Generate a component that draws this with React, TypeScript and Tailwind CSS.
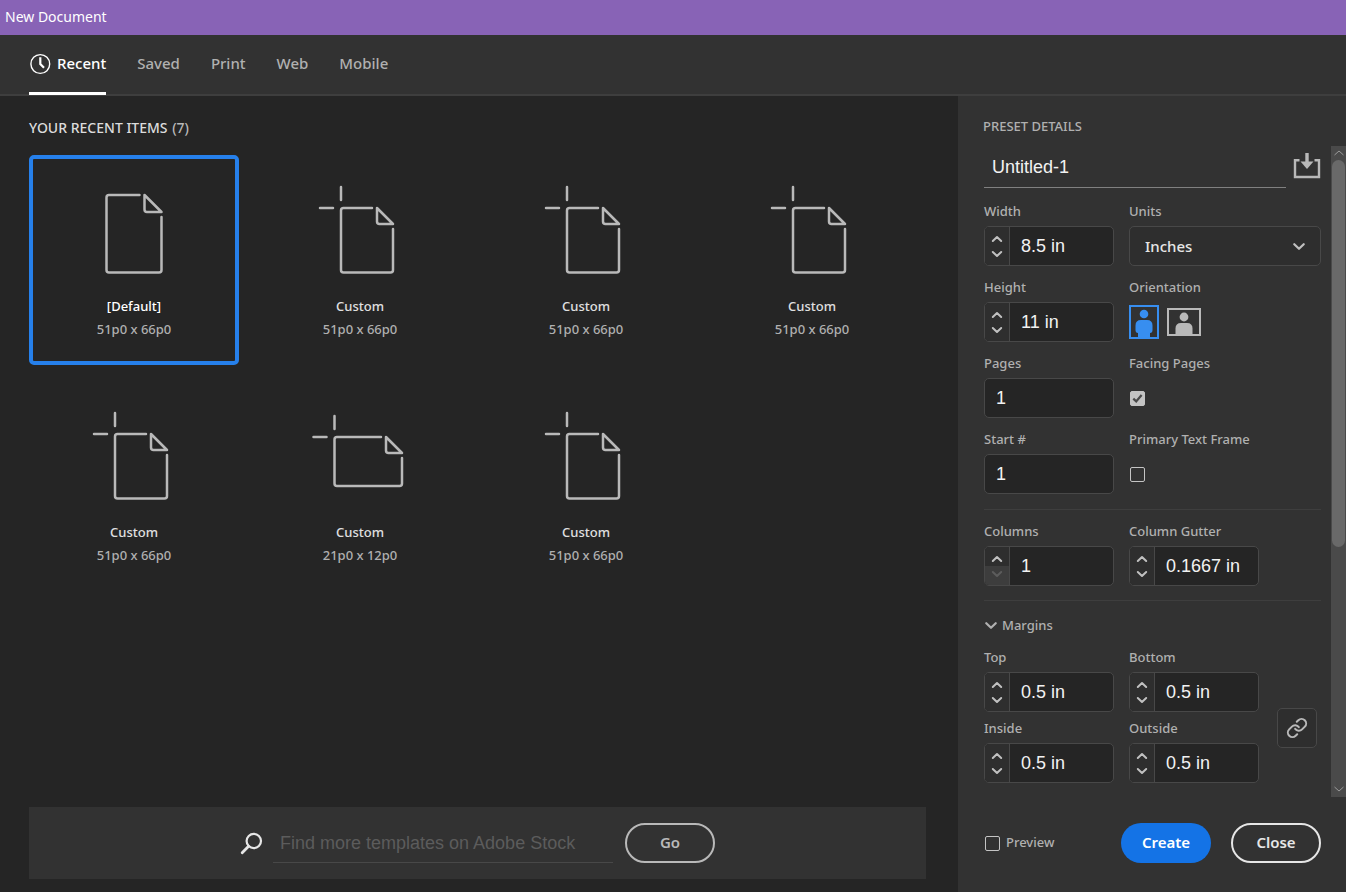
import { useId, type ReactNode } from "react";

type DocShape = { left: number; top: number; right: number; bottom: number; fold: number; marks: boolean };

const defaultDoc: DocShape = { left: 32.5, top: 15, right: 87.5, bottom: 92.5, fold: 17, marks: false };
const portraitDoc: DocShape = { left: 41, top: 28, right: 93, bottom: 92.5, fold: 16, marks: true };
const landscapeDoc: DocShape = { left: 34.5, top: 31, right: 102, bottom: 80, fold: 16, marks: true };

const presets = [
  { name: "[Default]", size: "51p0 x 66p0", doc: defaultDoc },
  { name: "Custom", size: "51p0 x 66p0", doc: portraitDoc },
  { name: "Custom", size: "51p0 x 66p0", doc: portraitDoc },
  { name: "Custom", size: "51p0 x 66p0", doc: portraitDoc },
  { name: "Custom", size: "51p0 x 66p0", doc: portraitDoc },
  { name: "Custom", size: "21p0 x 12p0", doc: landscapeDoc },
  { name: "Custom", size: "51p0 x 66p0", doc: portraitDoc },
];

function DocIcon({ left: l, top: t, right: r, bottom: b, fold: f, marks }: DocShape) {
  return (
    <svg width="120" height="100" viewBox="0 0 120 100" fill="none" stroke="#b9b9b9" strokeWidth="2.5" strokeLinecap="round" strokeLinejoin="round" aria-hidden="true">
      <path d={`M${r - f - 5} ${t}H${l + 2.5}Q${l} ${t} ${l} ${t + 2.5}V${b - 2.5}Q${l} ${b} ${l + 2.5} ${b}H${r - 2.5}Q${r} ${b} ${r} ${b - 2.5}V${t + f + 5}`} />
      <path d={`M${r - f} ${t}V${t + f - 2.5}Q${r - f} ${t + f} ${r - f + 2.5} ${t + f}H${r}Z`} />
      {marks && <path d={`M${l} ${t - 21}V${t - 8}M${l - 21} ${t}H${l - 8}`} />}
    </svg>
  );
}

function Chevron({ up = false, className }: { up?: boolean; className: string }) {
  return (
    <svg viewBox="0 0 12 8" className={className} fill="none" stroke="currentColor" strokeWidth="2" strokeLinecap="round" strokeLinejoin="round" aria-hidden="true">
      <path d={up ? "M1.8 6 6 2 10.2 6" : "M1.8 2 6 6 10.2 2"} />
    </svg>
  );
}

const inputText = "font-['Liberation_Sans',sans-serif] text-[18px] text-[#f2f2f2] outline-none";

function Field({ label, value, stepper = true, minReached = false }: { label: string; value: string; stepper?: boolean; minReached?: boolean }) {
  const id = useId();
  return (
    <div className="flex w-[130px] flex-col gap-[7px]">
      <label htmlFor={id} className="leading-4">{label}</label>
      <div className="flex h-10 overflow-hidden rounded-[5px] border border-[#484848] bg-[#252525]">
        {stepper && (
          <div className="flex w-[25px] shrink-0 flex-col border-r border-[#484848] bg-[#2e2e2e] text-[#c0c0c0]">
            <button type="button" aria-label={`Increase ${label}`} className="flex flex-1 items-end justify-center pb-[3px]">
              <Chevron up className="h-2 w-3" />
            </button>
            <button
              type="button"
              aria-label={`Decrease ${label}`}
              disabled={minReached}
              className="flex flex-1 items-start justify-center pt-1 disabled:bg-[#3d3d3d] disabled:text-[#5c5c5c]"
            >
              <Chevron className="h-2 w-3" />
            </button>
          </div>
        )}
        <input id={id} defaultValue={value} className={`w-full min-w-0 bg-transparent px-[11px] ${inputText}`} />
      </div>
    </div>
  );
}

function CheckBox({ id, checked = false }: { id: string; checked?: boolean }) {
  return (
    <span className="relative flex size-[15px] shrink-0">
      <input
        id={id}
        type="checkbox"
        defaultChecked={checked}
        className="peer size-[15px] appearance-none rounded-[2px] border border-[#c4c4c4] checked:bg-[#c4c4c4]"
      />
      <svg viewBox="0 0 15 15" className="pointer-events-none absolute inset-0 hidden size-[15px] peer-checked:block" fill="none" stroke="#4a4a4a" strokeWidth="2.2" aria-hidden="true">
        <path d="M3.3 7.6 6.2 10.4 11.6 4" />
      </svg>
    </span>
  );
}

function CheckField({ label, checked }: { label: string; checked?: boolean }) {
  const id = useId();
  return (
    <div className="flex flex-col gap-[7px]">
      <label htmlFor={id} className="leading-4">{label}</label>
      <div className="flex h-10 items-center pl-px">
        <CheckBox id={id} checked={checked} />
      </div>
    </div>
  );
}

function Row({ children }: { children: ReactNode }) {
  return <div className="grid grid-cols-[130px_1fr] gap-[15px]">{children}</div>;
}

function Header() {
  return (
    <header>
      <h1 className="flex h-[35px] items-center bg-[#8863b6] px-[5px] pb-[2px] text-[14px] text-white">New Document</h1>
      <nav className="flex h-[61px] gap-[31px] border-b-2 border-[#3e3e3e] bg-[#323232] px-[29px] text-[15px] font-medium text-[#b0b0b0]">
        <a href="#recent" aria-current="page" className="-mb-px flex items-center gap-[6px] border-b-[3px] border-white text-white">
          <svg viewBox="0 0 22 22" className="size-[22px]" fill="none" stroke="currentColor" aria-hidden="true">
            <circle cx="11.3" cy="11" r="9.4" strokeWidth="1.4" />
            <path d="M11.3 4.3V11L15 14.8" strokeWidth="2.2" />
          </svg>
          Recent
        </a>
        <a href="#saved" className="-mb-px flex items-center border-b-[3px] border-transparent">Saved</a>
        <a href="#print" className="-mb-px flex items-center border-b-[3px] border-transparent">Print</a>
        <a href="#web" className="-mb-px flex items-center border-b-[3px] border-transparent">Web</a>
        <a href="#mobile" className="-mb-px flex items-center border-b-[3px] border-transparent">Mobile</a>
      </nav>
    </header>
  );
}

function RecentItems() {
  return (
    <main className="flex min-w-0 flex-1 flex-col bg-[#252525] pt-[22px] pr-8 pb-[13px] pl-[29px]">
      <h2 className="text-[14px] leading-5 font-medium text-[#dcdcdc]">
        YOUR RECENT ITEMS <span className="pl-px text-[#b9b9b9]">(7)</span>
      </h2>
      <div className="mt-[17px] grid grid-cols-[repeat(auto-fill,210px)] gap-4">
        {presets.map((p, i) => (
          <button
            key={i}
            type="button"
            aria-pressed={i === 0}
            className="flex h-[210px] flex-col items-center rounded-[5px] border-4 border-transparent pt-[21px] text-[13px] leading-[23px] font-medium text-[#b0b0b0] aria-pressed:border-[#2680eb]"
          >
            <DocIcon {...p.doc} />
            <span className={i === 0 ? "mt-[15px] text-white" : "mt-[15px] text-[#e0e0e0]"}>{p.name}</span>
            <span>{p.size}</span>
          </button>
        ))}
      </div>
      <form className="mt-auto flex items-center justify-center bg-[#323232] py-4" onSubmit={(e) => e.preventDefault()}>
        <svg viewBox="0 0 24 24" className="size-6" fill="none" stroke="#e6e6e6" strokeLinecap="round" aria-hidden="true">
          <circle cx="13.8" cy="10" r="7.2" strokeWidth="2.2" />
          <path d="M8.600 15.200 2.200 21.800" strokeWidth="2.800" />
        </svg>
        <input
          aria-label="Find more templates on Adobe Stock"
          placeholder="Find more templates on Adobe Stock"
          className={`ml-[9px] h-10 w-[340px] min-w-0 border-b border-[#484848] px-[7px] pt-px placeholder:text-[#5c5c5c] ${inputText}`}
        />
        <button type="submit" className="ml-3 h-10 w-[90px] rounded-full border-2 border-[#b9b9b9] pb-[2px] text-[15px] font-semibold text-[#b9b9b9]">
          Go
        </button>
      </form>
    </main>
  );
}

function Scrollbar() {
  return (
    <div className="flex w-[15px] shrink-0 flex-col items-center bg-[#4a4a4a] text-[#9a9a9a]" aria-hidden="true">
      <svg viewBox="0 0 12 8" className="my-[3px] h-2 w-3" fill="none" stroke="currentColor"><path d="M1.5 6 6 2 10.5 6" /></svg>
      <div className="h-[387px] w-[13px] rounded-full bg-[#696969]" />
      <svg viewBox="0 0 12 8" className="mt-auto mb-1 h-2 w-3" fill="none" stroke="currentColor"><path d="M1.5 2 6 6 10.5 2" /></svg>
    </div>
  );
}

function PresetDetails() {
  return (
    <aside className="flex w-[388px] shrink-0 flex-col bg-[#323232] text-[13px] font-medium text-[#b0b0b0]">
      <h2 className="pt-5 pb-[10px] pl-[25px] leading-5">PRESET DETAILS</h2>
      <div className="flex flex-1 gap-[10px] pl-[26px]">
        <form className="flex min-w-0 flex-1 flex-col pb-3">
          <div className="flex h-[42px] justify-between">
            <input aria-label="Document name" defaultValue="Untitled-1" className={`w-[302px] border-b border-[#808080] px-2 pt-px ${inputText}`} />
            <button type="button" aria-label="Save preset">
              <svg viewBox="0 0 28 28" className="mb-1 size-7" fill="none" stroke="#b9b9b9" strokeWidth="2.4" aria-hidden="true">
                <path d="M6.500 9.200H2V26H26V9.200H21.500" />
                <path d="M14 2V12" strokeWidth="3.400" />
                <path d="M7.500 10.500H20.500L14 18Z" fill="#b9b9b9" stroke="none" />
              </svg>
            </button>
          </div>
          <div className="mt-[15px] flex flex-col gap-[13px]">
            <Row>
              <Field label="Width" value="8.5 in" />
              <div className="flex flex-col gap-[7px]">
                <label htmlFor="units" className="leading-4">Units</label>
                <div className="relative">
                  <select id="units" defaultValue="Inches" className="h-10 w-full appearance-none rounded-[5px] border border-[#484848] bg-[#2e2e2e] px-[15px] text-[15px] text-[#e6e6e6] outline-none">
                    <option>Inches</option>
                    <option>Picas</option>
                  </select>
                  <Chevron className="pointer-events-none absolute top-4 right-[15px] h-[9px] w-[14px] text-[#c0c0c0]" />
                </div>
              </div>
            </Row>
            <Row>
              <Field label="Height" value="11 in" />
              <div className="flex flex-col gap-[7px]">
                <span className="leading-4">Orientation</span>
                <div className="flex h-10 items-center gap-2">
                  <button type="button" aria-label="Portrait" aria-pressed="true">
                    <svg viewBox="0 0 30 34" className="h-[34px] w-[30px]" fill="#378ef0" aria-hidden="true">
                      <path d="M1 1H29V33H1Z" fill="none" stroke="#378ef0" strokeWidth="2" />
                      <circle cx="15" cy="9" r="4.300" />
                      <path d="M12 15H18Q23.500 15 23.500 20.500V25Q23.500 28 21 28V33H9V28Q6.500 28 6.500 25V20.500Q6.500 15 12 15Z" />
                    </svg>
                  </button>
                  <button type="button" aria-label="Landscape" aria-pressed="false">
                    <svg viewBox="0 0 34 28" className="h-7 w-[34px]" fill="#b9b9b9" aria-hidden="true">
                      <path d="M1 1H33V27H1Z" fill="none" stroke="#b9b9b9" strokeWidth="2" />
                      <circle cx="17" cy="9" r="4.400" />
                      <path d="M14 15H20Q25.500 15 25.500 20.500V27H8.500V20.500Q8.500 15 14 15Z" />
                    </svg>
                  </button>
                </div>
              </div>
            </Row>
            <Row>
              <Field label="Pages" value="1" stepper={false} />
              <CheckField label="Facing Pages" checked />
            </Row>
            <Row>
              <Field label="Start #" value="1" stepper={false} />
              <CheckField label="Primary Text Frame" />
            </Row>
          </div>
          <div className="my-[15px] border-y border-[#3e3e3e] pt-[13px] pb-[14px]">
            <Row>
              <Field label="Columns" value="1" minReached />
              <Field label="Column Gutter" value="0.1667 in" />
            </Row>
          </div>
          <button type="button" aria-expanded="true" className="-mt-px flex items-center gap-1 self-start leading-5">
            <Chevron className="h-[9px] w-[14px]" />
            Margins
          </button>
          <div className="mt-[14px] flex items-center justify-between pr-1">
            <div className="flex flex-col gap-2">
              <Row>
                <Field label="Top" value="0.5 in" />
                <Field label="Bottom" value="0.5 in" />
              </Row>
              <Row>
                <Field label="Inside" value="0.5 in" />
                <Field label="Outside" value="0.5 in" />
              </Row>
            </div>
            <button type="button" aria-label="Link margins" className="mt-6 flex size-10 items-center justify-center rounded-[5px] border border-[#484848] bg-[#2e2e2e]">
              <svg viewBox="0 0 24 24" className="size-[22px]" fill="none" stroke="#b9b9b9" strokeWidth="2.200" strokeLinecap="round" aria-hidden="true">
                <path d="M10 13a5 5 0 0 0 7.540.540l3-3a5 5 0 0 0-7.070-7.070l-1.720 1.710" />
                <path d="M14 11a5 5 0 0 0-7.540-.540l-3 3a5 5 0 0 0 7.070 7.070l1.710-1.710" />
              </svg>
            </button>
          </div>
        </form>
        <Scrollbar />
      </div>
      <div className="flex items-center pt-[26px] pr-[25px] pb-[29px] pl-[27px]">
        <CheckBox id="preview" />
        <label htmlFor="preview" className="ml-[6px]">Preview</label>
        <button type="button" className="ml-auto h-10 w-[90px] rounded-full bg-[#1473e6] pb-[2px] text-[15px] font-semibold text-white">Create</button>
        <button type="button" className="ml-5 h-10 w-[90px] rounded-full border-2 border-[#e6e6e6] pb-[2px] text-[15px] font-semibold text-[#e6e6e6]">Close</button>
      </div>
    </aside>
  );
}

export default function App() {
  return (
    <div className="flex min-h-screen flex-col bg-[#252525] font-['Noto_Sans',sans-serif]">
      <Header />
      <div className="flex flex-1">
        <RecentItems />
        <PresetDetails />
      </div>
    </div>
  );
}
